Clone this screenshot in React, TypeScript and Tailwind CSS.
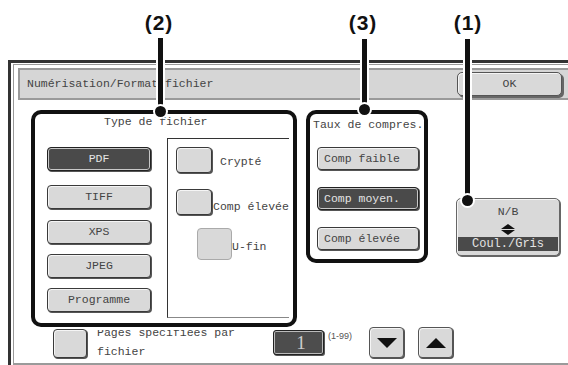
import React from "react";

const light =
  "flex items-center rounded-[4px] border border-[#3a3a3a] bg-[#d9d9d9] text-[#444] shadow-[inset_1px_1px_0_#f5f5f5,1px_1px_0_#555]";
const dark =
  "flex items-center rounded-[4px] border border-[#222] bg-[#4a4a4a] text-[#e4e4e4] shadow-[inset_0_0_0_1px_#c8c8c8,1px_1px_0_#555]";

function Callout({
  label,
  labelLeft,
  lineLeft,
  lineTop,
  lineHeight,
  dotLeft,
  dotTop,
}: {
  label: string;
  labelLeft: number;
  lineLeft: number;
  lineTop: number;
  lineHeight: number;
  dotLeft: number;
  dotTop: number;
}) {
  return (
    <>
      <div
        className="absolute top-[11px] w-[40px] text-center font-['Liberation_Sans',sans-serif] text-[21px] font-bold leading-[24px] tracking-[1px] text-[#111]"
        style={{ left: labelLeft - 20 }}
      >
        {label}
      </div>
      <div
        className="absolute w-[5px] bg-[#111] ring-2 ring-white"
        style={{ left: lineLeft, top: lineTop, height: lineHeight }}
      />
      <div
        className="absolute h-[11px] w-[11px] rounded-full bg-[#111] ring-2 ring-white"
        style={{ left: dotLeft, top: dotTop }}
      />
    </>
  );
}

export default function App() {
  return (
    <div className="relative h-[365px] w-[568px] overflow-hidden bg-white font-['Liberation_Mono',monospace] text-[11.5px] leading-[16px] text-[#444]">
      {/* frame */}
      <div className="ml-[8px] mt-[60px] h-[305px] w-[580px] border-l-[3px] border-t-[3px] border-[#333] pl-[2px] pt-[1px]">
        <div className="flex h-full flex-col border-b-2 border-l border-t border-[#9a9a9a]">
          {/* title bar */}
          <div className="ml-[4px] mt-[3px] flex h-[32px] w-[560px] items-center justify-between border-2 border-[#9a9a9a] bg-[#d6d6d6] pl-[7px] pr-[14px]">
            <span>Numérisation/Format fichier</span>
            <div className="flex h-[24px] w-[105px] items-center justify-center rounded-[5px] border border-[#555] bg-[#d9d9d9] shadow-[inset_1px_1px_0_#f5f5f5,2px_2px_0_#666]">
              OK
            </div>
          </div>

          {/* main row */}
          <div className="ml-[17px] mt-[10px] flex items-start">
            {/* box 2 */}
            <div className="flex h-[217px] w-[266px] flex-col rounded-[10px] border-[4px] border-[#111]">
              <div className="h-[24px] pl-[69px]">Type de fichier</div>
              <div className="flex">
                <div className="flex w-[132px] flex-col pl-[12px] pt-[9px]">
                  <div className={`${dark} h-[24px] w-[104px] justify-center`}>PDF</div>
                  <div className={`${light} mt-[14px] h-[24px] w-[104px] justify-center`}>TIFF</div>
                  <div className={`${light} mt-[11px] h-[24px] w-[104px] justify-center`}>XPS</div>
                  <div className={`${light} mt-[10px] h-[24px] w-[104px] justify-center`}>JPEG</div>
                  <div className={`${light} mt-[10px] h-[24px] w-[104px] justify-center`}>Programme</div>
                </div>
                <div className="flex h-[180px] w-[122px] flex-col border-b border-l border-t border-b-[#888] border-l-[#333] border-t-[#333] pl-[8px] pt-[8px]">
                  <div className="flex items-center">
                    <div className={`${light} h-[26px] w-[36px]`} />
                    <span className="ml-[8px] mt-[4px]">Crypté</span>
                  </div>
                  <div className="mt-[16px] flex items-end">
                    <div className={`${light} h-[26px] w-[36px]`} />
                    <span className="ml-[1px]">Comp élevée</span>
                  </div>
                  <div className="ml-[21px] mt-[13px] flex items-center">
                    <div className="h-[32px] w-[35px] rounded-[4px] border border-[#aaa] bg-[#d9d9d9]" />
                    <span className="mt-[6px]">U-fin</span>
                  </div>
                </div>
              </div>
            </div>

            {/* box 3 */}
            <div className="ml-[9px] flex h-[153px] w-[122px] flex-col rounded-[10px] border-[4px] border-[#111] pl-[3px] pt-[3px]">
              <div>Taux de compres.</div>
              <div className={`${light} ml-[4px] mt-[14px] h-[23px] w-[102px] pl-[6px]`}>Comp faible</div>
              <div className={`${dark} ml-[4px] mt-[17px] h-[23px] w-[102px] pl-[6px]`}>Comp moyen.</div>
              <div className={`${light} ml-[4px] mt-[17px] h-[23px] w-[102px] pl-[6px]`}>Comp élevée</div>
            </div>

            {/* N/B button */}
            <div className="ml-[28px] mt-[88px] flex h-[58px] w-[104px] flex-col items-center rounded-[5px] border border-[#666] bg-[#d9d9d9] shadow-[inset_1px_1px_0_#f5f5f5,1px_1px_0_#666]">
              <div className="mt-[5px] h-[16px]">N/B</div>
              <svg className="mt-[4px]" width="14" height="11" viewBox="0 0 14 11">
                <polygon points="0,5 7,0 14,5" fill="#111" />
                <polygon points="0,6 14,6 7,11" fill="#111" />
              </svg>
              <div className="mt-[2px] flex h-[14px] w-[100px] items-center justify-center bg-[#4a4a4a] text-[12px] text-[#e4e4e4]">
                Coul./Gris
              </div>
            </div>
          </div>

          {/* bottom row */}
          <div className="ml-[39px] flex items-start">
            <div className={`${light} mt-[2px] h-[29px] w-[34px]`} />
            <div className="ml-[10px] mt-[3px] h-[31px] w-[176px] overflow-hidden">
              <div className="-mt-[7px] leading-[19px]">
                Pages spécifiées par
                <br />
                fichier
              </div>
            </div>
            <div className="mt-[3px] flex h-[25px] w-[51px] items-center justify-center rounded-[3px] border border-[#222] bg-[#4d4d4d] pl-[5px] font-['Liberation_Serif',serif] text-[19px] text-[#ccc] shadow-[inset_0_0_0_1px_#bbb,1px_1px_0_#555]">
              1
            </div>
            <div className="ml-[4px] mt-[3px] w-[41px] font-['Liberation_Sans',sans-serif] text-[9px] leading-[12px] text-[#555]">
              (1-99)
            </div>
            <div className="flex h-[31px] w-[35px] items-center justify-center rounded-[4px] border border-[#555] bg-[#d9d9d9] shadow-[inset_1px_1px_0_#f5f5f5,1px_1px_0_#555]">
              <svg width="20" height="10" viewBox="0 0 20 10">
                <polygon points="0,0 20,0 10,10" fill="#111" />
              </svg>
            </div>
            <div className="ml-[14px] flex h-[31px] w-[35px] items-center justify-center rounded-[4px] border border-[#555] bg-[#d9d9d9] shadow-[inset_1px_1px_0_#f5f5f5,1px_1px_0_#555]">
              <svg width="20" height="10" viewBox="0 0 20 10">
                <polygon points="0,10 20,10 10,0" fill="#111" />
              </svg>
            </div>
          </div>
        </div>
      </div>

      {/* callouts */}
      <Callout label="(2)" labelLeft={159} lineLeft={158} lineTop={38} lineHeight={72} dotLeft={155} dotTop={106} />
      <Callout label="(3)" labelLeft={363} lineLeft={362} lineTop={39} lineHeight={70} dotLeft={359} dotTop={104} />
      <Callout label="(1)" labelLeft={468} lineLeft={465} lineTop={39} lineHeight={160} dotLeft={462} dotTop={195} />
    </div>
  );
}
